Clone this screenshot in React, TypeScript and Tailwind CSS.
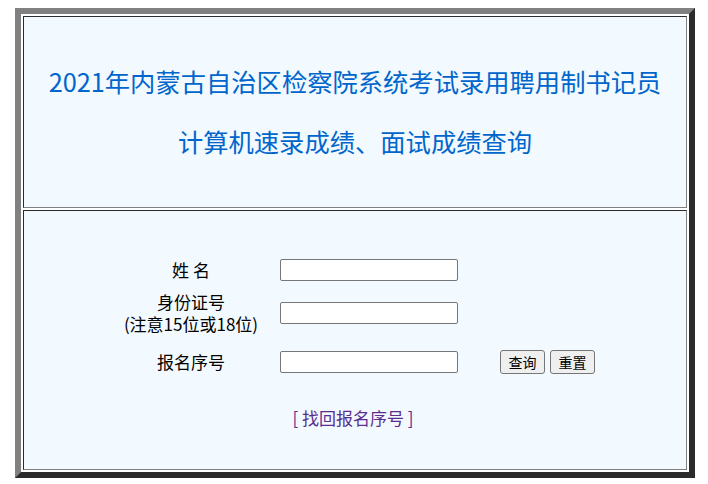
import React from "react";

const font = { fontFamily: '"Noto Sans CJK SC", "Noto Sans", sans-serif' };

export default function App() {
  return (
    <div className="w-[708px] h-[484px] bg-white pt-[8px] pl-[15px]" style={font}>
      <div className="w-[680px] h-[470px] border-[6px] border-t-[#808080] border-l-[#808080] border-r-[#2b2b2b] border-b-[#2b2b2b] p-[2px] flex flex-col gap-[2px] bg-white">
        <div className="h-[192px] border border-t-[#2b2b2b] border-l-[#2b2b2b] border-r-[#808080] border-b-[#808080] bg-[#f2f9ff] flex flex-col items-center justify-center">
          <div className="h-[60px] flex items-center text-[25.3px] text-[#0066cc] whitespace-nowrap">
            2021年内蒙古自治区检察院系统考试录用聘用制书记员
          </div>
          <div className="h-[60px] flex items-center text-[25.3px] text-[#0066cc] whitespace-nowrap">
            计算机速录成绩、面试成绩查询
          </div>
        </div>
        <div className="h-[260px] border border-t-[#2b2b2b] border-l-[#2b2b2b] border-r-[#808080] border-b-[#808080] bg-[#f2f9ff] pt-[48px] flex flex-col text-[17px] text-black">
          <div className="h-[22px] flex items-center">
            <div className="ml-[86px] w-[162px] text-center leading-[22px]">姓 名</div>
            <input className="ml-[8px] w-[178px] h-[22px] border border-[#767676] rounded-[2px] bg-white" />
          </div>
          <div className="mt-[10px] h-[44px] flex items-center">
            <div className="ml-[86px] w-[162px] text-center leading-[22px] whitespace-nowrap">
              <div>身份证号</div>
              <div>(注意15位或18位)</div>
            </div>
            <input className="ml-[8px] w-[178px] h-[22px] border border-[#767676] rounded-[2px] bg-white" />
          </div>
          <div className="mt-[15px] h-[24px] flex items-center">
            <div className="ml-[86px] w-[162px] text-center leading-[22px]">报名序号</div>
            <input className="ml-[8px] w-[178px] h-[22px] border border-[#767676] rounded-[2px] bg-white" />
            <button className="ml-[42px] w-[45px] h-[24px] border border-[#767676] rounded-[3px] bg-[#efefef] text-[14px] leading-none text-black">
              查询
            </button>
            <button className="ml-[5px] w-[45px] h-[24px] border border-[#767676] rounded-[3px] bg-[#efefef] text-[14px] leading-none text-black">
              重置
            </button>
          </div>
          <div className="mt-[33px] h-[22px] leading-[22px] text-center text-[#5b2d8e] pr-[4px]">
            [ <span>找回报名序号</span> ]
          </div>
        </div>
      </div>
    </div>
  );
}
